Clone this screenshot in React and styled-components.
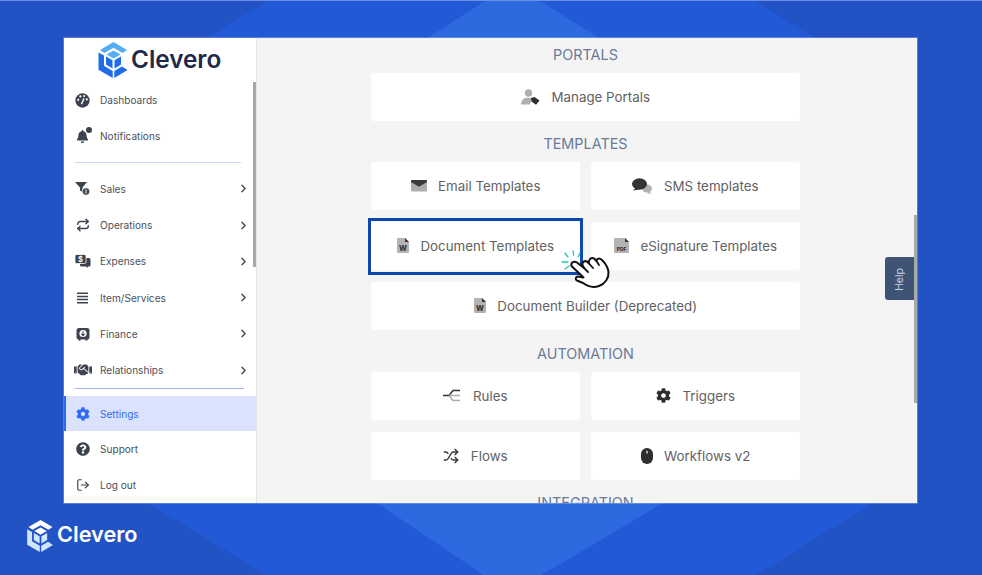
import React from 'react';
import styled, { createGlobalStyle } from 'styled-components';
import { FaBell, FaCog, FaHandshake, FaQuestionCircle } from 'react-icons/fa';
import { ChevronRight, LogOut, Repeat, Shuffle } from 'lucide-react';

const Global = createGlobalStyle`
  html, body { margin: 0; padding: 0; background: #2253c6; }
  * { box-sizing: border-box; }
`;

const Page = styled.div`
  position: relative;
  width: 982px;
  height: 575px;
  overflow: hidden;
  background: #2253c4;
  border-top: 1px solid #6c8fe6;
  padding-top: 37px;
  font-family: Inter, "Liberation Sans", sans-serif;
  &::before {
    content: '';
    position: absolute;
    inset: 0;
    background: #2259d6;
    clip-path: polygon(268px 0, 755px 0, 900px 90px, 900px 485px, 755px 575px, 268px 575px, 112px 480px, 112px 95px);
  }
  &::after {
    content: '';
    position: absolute;
    inset: 0;
    background: #2d6ae0;
    clip-path: polygon(485px 0, 540px 0, 700px 100px, 700px 480px, 540px 575px, 485px 575px, 330px 470px, 330px 100px);
  }
`;

const Window = styled.div`
  position: relative;
  z-index: 1;
  margin-left: 64px;
  width: 853px;
  height: 465px;
  display: flex;
  overflow: hidden;
  background: #f4f4f4;
  box-shadow: 0 0 0 1px rgba(225, 230, 245, 0.28);
`;

const Sidebar = styled.aside`
  position: relative;
  flex: 0 0 193px;
  background: #fff;
  border-right: 1px solid #e6e6e6;
  display: flex;
  flex-direction: column;
`;

const Thumb = styled.div`
  position: absolute;
  right: ${(p) => p.$right}px;
  top: ${(p) => p.$top}px;
  width: 3px;
  height: ${(p) => p.$height}px;
  background: #a9a9a9;
`;

const Brand = styled.div`
  height: 43.5px;
  display: flex;
  align-items: center;
  padding: 0 0 0 34px;
  gap: 2px;
`;

const BrandName = styled.span`
  font-size: ${(p) => p.$size}px;
  font-weight: 600;
  color: ${(p) => p.$color};
  line-height: 1;
  margin-bottom: 2px;
`;

const NavItem = styled.div`
  height: ${(p) => (p.$active ? 35 : 36.3)}px;
  display: flex;
  align-items: center;
  padding: 1px 6px 0 ${(p) => (p.$active ? 9 : 11)}px;
  font-size: 10.1px;
  color: ${(p) => (p.$active ? '#2f6bf5' : '#4b505a')};
  background: ${(p) => (p.$active ? '#dbe2fd' : 'transparent')};
  border-left: ${(p) => (p.$active ? '2px solid #2d6cf0' : '0')};
`;

const NavIcon = styled.span`
  position: relative;
  flex: 0 0 15px;
  width: 15px;
  min-width: 0;
  height: 15px;
  margin-right: 10px;
  display: flex;
  align-items: center;
  justify-content: center;
  color: ${(p) => (p.$active ? '#2f6bf5' : '#3c424e')};
  svg { flex: none; }
`;

const Badge = styled.i`
  position: absolute;
  top: -2px;
  right: -2px;
  width: 6px;
  height: 6px;
  border-radius: 50%;
  background: #3c424e;
`;

const NavLabel = styled.span`
  flex: 1;
`;

const Chevron = styled(ChevronRight)`
  color: #3c424e;
`;

const Divider = styled.div`
  height: ${(p) => p.$h}px;
  display: flex;
  align-items: flex-start;
  padding: ${(p) => p.$pt || 0}px ${(p) => p.$pr}px 0 11px;
  &::before {
    content: '';
    flex: 1;
    height: 1.5px;
    background: ${(p) => p.$color};
  }
`;

const Main = styled.main`
  position: relative;
  flex: 1;
  min-width: 0;
  padding-right: 3px;
  display: flex;
  justify-content: center;
  overflow: hidden;
`;

const Column = styled.div`
  width: 429px;
  flex: none;
`;

const Heading = styled.h2`
  margin: ${(p) => p.$top || 0}px 0 0;
  height: 35px;
  padding-bottom: 2px;
  display: flex;
  align-items: center;
  justify-content: center;
  font-size: 14.4px;
  font-weight: 400;
  color: #6a7a98;
`;

const CardGrid = styled.div`
  display: grid;
  grid-template-columns: 209px 209px;
  justify-content: space-between;
  gap: 12px 11px;
`;

const Card = styled.div`
  position: relative;
  height: 48px;
  padding-bottom: 1px;
  grid-column: ${(p) => (p.$wide ? '1 / -1' : 'auto')};
  display: flex;
  align-items: center;
  justify-content: center;
  gap: 11.5px;
  background: #fff;
  border-radius: 3px;
  font-size: 13.35px;
  color: #626262;
`;

const Highlight = styled.div`
  position: absolute;
  inset: -4px -3px -5px -3px;
  border: 3px solid #0b47ad;
  pointer-events: none;
`;

const Cursor = styled.svg`
  position: absolute;
  left: 184px;
  top: 23px;
  z-index: 2;
`;

const HelpTab = styled.div`
  position: absolute;
  right: 3px;
  top: 219px;
  width: 29px;
  height: 43px;
  padding-top: 2px;
  display: flex;
  align-items: center;
  justify-content: center;
  background: #3f5475;
  border-radius: 3px 0 0 3px;
  color: #c8d1e0;
  font-size: 10.5px;
  span { transform: rotate(-90deg); }
`;

const Footer = styled.footer`
  position: relative;
  z-index: 1;
  height: 66px;
  display: flex;
  align-items: center;
  padding-left: 27px;
  gap: 3px;
`;

const Logo = ({ w, h, roof, side }) => (
  <svg width={w} height={h} viewBox="0 0 30 36" style={{ flex: 'none' }}>
    <polygon points="1.5,8 15,0 28.5,8 24,11 15,5.8 6,11" fill={roof} />
    <polygon points="0,10.5 5.5,13.6 5.5,23.8 14.2,29 14.2,36 0,27.8" fill={side} />
    <polygon points="15.8,29 23.5,24.6 29,28 15.8,36" fill={side} />
    <polygon points="15,8.5 22,12.5 15,16.5 8,12.5" fill={roof} />
    <polygon points="7.5,14.5 14,18.3 14,26.5 7.5,22.6" fill={side} />
    <polygon points="22.5,14.5 16,18.3 16,26.5 22.5,22.6" fill={side} />
  </svg>
);

const Gauge = () => (
  <svg width="15" height="15" viewBox="0 0 14 14">
    <circle cx="7" cy="7" r="6.7" fill="currentColor" />
    <circle cx="3" cy="6.4" r="1" fill="#fff" />
    <circle cx="5" cy="3.2" r="1" fill="#fff" />
    <circle cx="8.6" cy="2.8" r="1" fill="#fff" />
    <circle cx="11" cy="6" r="1" fill="#fff" />
    <path d="M6 10.5 L8.4 5" stroke="#fff" strokeWidth="1.3" />
  </svg>
);

const Funnel = () => (
  <svg width="16" height="15" viewBox="0 0 16 15">
    <path d="M0 1 H12 L7.5 6.5 V11 L5 9.5 V6.5 Z" fill="currentColor" />
    <circle cx="11" cy="10.5" r="3.8" fill="currentColor" stroke="#fff" strokeWidth="0.8" />
    <path d="M11 8.5 V12.5" stroke="#fff" strokeWidth="1" />
  </svg>
);

const Bills = () => (
  <svg width="16" height="14" viewBox="0 0 16 14">
    <rect x="5" y="4" width="10.5" height="8.5" rx="1.5" fill="currentColor" />
    <path d="M11 12 L13 14 V12 Z" fill="currentColor" />
    <rect x="0" y="0.5" width="11" height="9" rx="1.5" fill="currentColor" stroke="#fff" strokeWidth="0.8" />
    <text x="5.5" y="7.8" fontSize="7.5" fontWeight="700" fill="#fff" textAnchor="middle">$</text>
  </svg>
);

const Lines = () => (
  <svg width="13" height="12" viewBox="0 0 13 12">
    <path d="M1 1.2 H12 M1 4.4 H12 M1 7.6 H12 M1 10.8 H12" stroke="currentColor" strokeWidth="1.5" />
  </svg>
);

const Vault = () => (
  <svg width="14" height="14" viewBox="0 0 14 14">
    <rect x="0.5" y="1" width="13" height="11.5" rx="2.5" fill="currentColor" />
    <rect x="2.5" y="12" width="2" height="1.6" fill="currentColor" />
    <rect x="9.5" y="12" width="2" height="1.6" fill="currentColor" />
    <circle cx="7" cy="6.5" r="3.6" fill="#fff" />
    <path d="M7 4.2 V8.4 M5.3 6.8 L7 8.6 L8.7 6.8" stroke="currentColor" strokeWidth="1.1" fill="none" />
  </svg>
);

const PortalIcon = () => (
  <svg width="19" height="16" viewBox="0 0 19 16">
    <circle cx="7.5" cy="4" r="3.7" fill="#b0b0b0" />
    <path d="M0 15.5 C0 10.5 3 8.7 7.5 8.7 C9 8.7 10.2 9 11 9.5 L9 15.5 Z" fill="#b0b0b0" />
    <path d="M10 9 L13.5 8 L18.5 11.5 L15 15.8 L10.5 12.5 Z" fill="#2f2f2f" />
  </svg>
);

const MailIcon = () => (
  <svg width="16" height="12" viewBox="0 0 16 12">
    <rect y="0.5" width="16" height="11" rx="1" fill="#adadad" />
    <path d="M0 1 A1 1 0 0 1 1 0 H15 A1 1 0 0 1 16 1 V2 L8 6.8 L0 2 Z" fill="#3a3a3a" />
  </svg>
);

const ChatIcon = () => (
  <svg width="20" height="16" viewBox="0 0 20 16">
    <ellipse cx="15" cy="10.5" rx="5" ry="4" fill="#b0b0b0" />
    <path d="M17 13.5 L19.5 15.5 H15 Z" fill="#b0b0b0" />
    <ellipse cx="7.5" cy="6" rx="7.5" ry="5.8" fill="#333" />
    <path d="M3.5 10 L1 12.6 L7 11.6 Z" fill="#333" />
  </svg>
);

const FileIcon = ({ label, w = 12, h = 15, size = 7.5 }) => (
  <svg width={w} height={h} viewBox={`0 0 ${w} ${h}`}>
    <path d={`M1 0 H${w - 4} L${w} 4 V${h - 1} A1 1 0 0 1 ${w - 1} ${h} H1 A1 1 0 0 1 0 ${h - 1} V1 A1 1 0 0 1 1 0 Z`} fill="#b3b3b3" />
    <path d={`M${w - 4} 0 L${w} 4 H${w - 4} Z`} fill="#333" />
    <text x={w / 2} y={h - 2} fontSize={size} fontWeight="800" fill="#333" textAnchor="middle">{label}</text>
  </svg>
);

const RulesIcon = () => (
  <svg width="18" height="13" viewBox="0 0 18 13">
    <path d="M0 6.5 H6 L10 1.5 H17" stroke="#333" strokeWidth="1.5" fill="none" />
    <path d="M6 6.5 H17 M6 6.5 L10 11.5 H17" stroke="#aaa" strokeWidth="1.5" fill="none" />
  </svg>
);

const MouseIcon = () => (
  <svg width="12" height="16" viewBox="0 0 12 16">
    <rect width="12" height="16" rx="6" fill="#2e2e2e" />
    <path d="M6 2.8 V5.4" stroke="#fff" strokeWidth="1.2" />
  </svg>
);

const HandCursor = () => (
  <Cursor width="60" height="48" viewBox="0 0 60 48">
    <g stroke="#27c4b4" strokeWidth="1.3" strokeLinecap="round">
      <path d="M10 8 L13 12 M18 6 L18.6 10 M25 8 L23 12 M7 17 L13 17 M10 24 L14 21" />
    </g>
    <path
      d="M16.5 21 C15.5 17.5 19 15.5 22 17.5 L29 23 L27.5 20 C26.5 17 30 15 32.5 17 L34 18.5 C33 15 36 12 39 13.5 L41.5 16 C41.5 13 45 13 47 15 C50 18 53 22 53.5 27 C54 33 50 39 44 41 C38 43 32 41 28 38 L22 35.5 C20 34.5 20.5 31.5 23 31.5 L28.5 32.5 Z"
      fill="#fff"
      stroke="#111"
      strokeWidth="2"
      strokeLinejoin="round"
    />
    <path d="M29 23 L33 27 M34 18.5 L38 23 M41.5 16 L44 20" stroke="#111" strokeWidth="1.8" fill="none" strokeLinecap="round" />
  </Cursor>
);

const Nav = ({ icon, label, arrow, active, badge }) => (
  <NavItem $active={active}>
    <NavIcon $active={active}>
      {icon}
      {badge && <Badge />}
    </NavIcon>
    <NavLabel>{label}</NavLabel>
    {arrow && <Chevron size={13} strokeWidth={2.4} />}
  </NavItem>
);

export default function App() {
  return (
    <>
      <Global />
      <Page>
        <Window>
          <Sidebar>
            <Brand>
              <Logo w={31} h={36} roof="#55aef5" side="#1f6ce6" />
              <BrandName $size={24.3} $color="#1e2a47">Clevero</BrandName>
            </Brand>
            <Nav icon={<Gauge />} label="Dashboards" />
            <Nav icon={<FaBell size={13} />} label="Notifications" badge />
            <Divider $h={16.5} $pt={8} $pr={15} $color="#c9d6fb" />
            <Nav icon={<Funnel />} label="Sales" arrow />
            <Nav icon={<Repeat size={14} strokeWidth={2.4} />} label="Operations" arrow />
            <Nav icon={<Bills />} label="Expenses" arrow />
            <Nav icon={<Lines />} label="Item/Services" arrow />
            <Nav icon={<Vault />} label="Finance" arrow />
            <Nav icon={<FaHandshake size={18} />} label="Relationships" arrow />
            <Divider $h={8} $pr={12} $color="#9db8f5" />
            <Nav icon={<FaCog size={14} />} label="Settings" active />
            <Nav icon={<FaQuestionCircle size={14} />} label="Support" />
            <Nav icon={<LogOut size={14} strokeWidth={2} />} label="Log out" />
            <Thumb $right={0} $top={44} $height={185} />
          </Sidebar>
          <Main>
            <Column>
              <Heading>PORTALS</Heading>
              <CardGrid>
                <Card $wide><PortalIcon />Manage Portals</Card>
              </CardGrid>
              <Heading $top={6}>TEMPLATES</Heading>
              <CardGrid>
                <Card><MailIcon />Email Templates</Card>
                <Card><ChatIcon />SMS templates</Card>
                <Card>
                  <FileIcon label="W" />
                  Document Templates
                  <Highlight />
                  <HandCursor />
                </Card>
                <Card><FileIcon label="PDF" w={15} h={15} size={4.8} />eSignature Templates</Card>
                <Card $wide><FileIcon label="W" />Document Builder (Deprecated)</Card>
              </CardGrid>
              <Heading $top={7}>AUTOMATION</Heading>
              <CardGrid>
                <Card><RulesIcon />Rules</Card>
                <Card><FaCog size={15} color="#2e2e2e" />Triggers</Card>
                <Card><Shuffle size={16} color="#333" strokeWidth={2} />Flows</Card>
                <Card><MouseIcon />Workflows v2</Card>
              </CardGrid>
              <Heading $top={6}>INTEGRATION</Heading>
            </Column>
            <HelpTab><span>Help</span></HelpTab>
            <Thumb $right={0} $top={177} $height={188} />
          </Main>
        </Window>
        <Footer>
          <Logo w={27} h={32} roof="#ffffff" side="#cfe6ff" />
          <BrandName $size={21.7} $color="#ffffff">Clevero</BrandName>
        </Footer>
      </Page>
    </>
  );
}
